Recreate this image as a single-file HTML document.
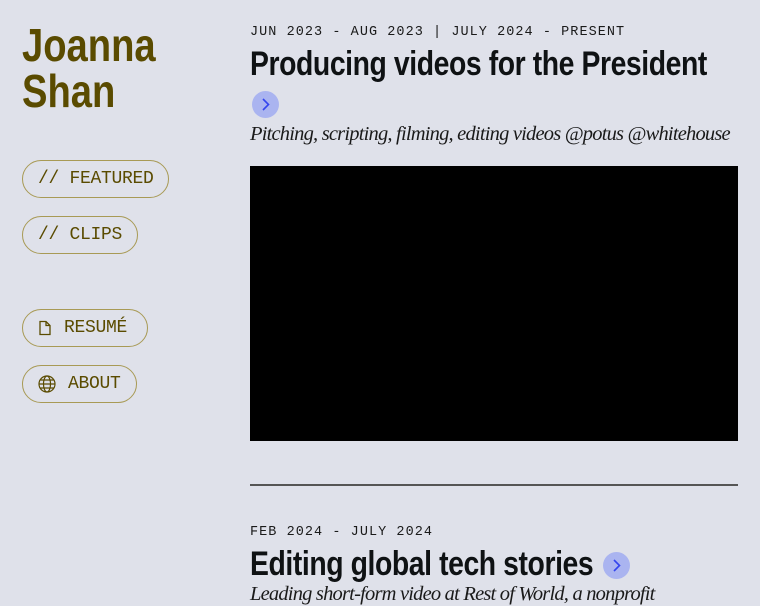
<!DOCTYPE html>
<html><head><meta charset="utf-8"><style>
body{margin:0;width:760px;height:600px;background:#dfe1ea;overflow:hidden;position:relative;font-family:"Liberation Sans",sans-serif}
.name{position:absolute;left:22px;top:22px;font-family:"Liberation Sans",sans-serif;font-weight:bold;font-size:46px;line-height:46px;color:#5a4b00;transform:scaleX(0.83);transform-origin:left top;white-space:nowrap}
.btn{position:absolute;left:22px;height:38px;border:1.5px solid #a89a55;border-radius:19px;box-sizing:border-box;font-family:"Liberation Mono",monospace;font-size:18px;color:#5a4b00;padding:0 15px;display:flex;align-items:center;gap:12px;white-space:nowrap;letter-spacing:-0.3px}
.date{position:absolute;left:250px;font-family:"Liberation Mono",monospace;font-size:13.5px;letter-spacing:1.05px;color:#1a1a1a;white-space:nowrap}
.title{position:absolute;left:250px;font-family:"Liberation Sans",sans-serif;font-weight:bold;font-size:34px;color:#0f1214;white-space:nowrap;transform:scaleX(0.834);transform-origin:left top;letter-spacing:-0.5px}
.arr{display:inline-block;width:27px;height:27px;border-radius:50%;background:#aab4f0;position:absolute}
.sub{position:absolute;left:250px;font-family:"Liberation Serif",serif;font-style:italic;font-size:20.5px;color:#1a1a1a;white-space:nowrap;letter-spacing:-0.8px}
</style></head><body>
<div class="name">Joanna<br>Shan</div>
<div class="btn" style="top:160px;width:147px">// FEATURED</div>
<div class="btn" style="top:216px;width:116px">// CLIPS</div>
<div class="btn" style="top:309px;width:126px"><svg width="14" height="16" viewBox="0 0 14 16"><path d="M2 1.5h6l4 4v9H2z M8 1.5v4h4" fill="none" stroke="#5a4b00" stroke-width="1.3"/></svg>RESUMÉ</div>
<div class="btn" style="top:365px;width:115px"><svg width="18" height="18" viewBox="0 0 18 18" fill="none" stroke="#5a4b00" stroke-width="1.2"><circle cx="9" cy="9" r="8"/><ellipse cx="9" cy="9" rx="3.5" ry="8"/><path d="M1 9h16M2.5 5h13M2.5 13h13"/></svg>ABOUT</div>

<div class="date" style="top:25px">JUN 2023 - AUG 2023 | JULY 2024 - PRESENT</div>
<div class="title" style="top:45px">Producing videos for the President</div>
<span class="arr" style="left:252px;top:91px"><svg width="27" height="27" viewBox="0 0 27 27"><path d="M11 8l5.5 5.5L11 19" fill="none" stroke="#3344ee" stroke-width="1.6"/></svg></span>
<div class="sub" style="top:123px">Pitching, scripting, filming, editing videos @potus @whitehouse</div>
<div style="position:absolute;left:250px;top:166px;width:488px;height:275px;background:#000"></div>
<div style="position:absolute;left:250px;top:484px;width:488px;height:1.5px;background:#555"></div>

<div class="date" style="top:525px">FEB 2024 - JULY 2024</div>
<div class="title" style="top:545px">Editing global tech stories</div>
<span class="arr" style="left:603px;top:552px"><svg width="27" height="27" viewBox="0 0 27 27"><path d="M11 8l5.5 5.5L11 19" fill="none" stroke="#3344ee" stroke-width="1.6"/></svg></span>
<div class="sub" style="top:583px">Leading short-form video at Rest of World, a nonprofit</div>
</body></html>
